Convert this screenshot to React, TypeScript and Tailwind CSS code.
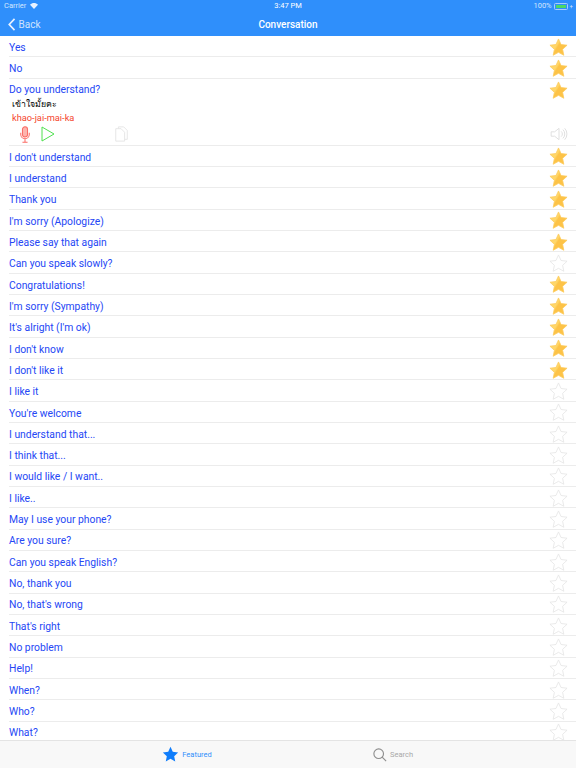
const before = ["Yes", "No"];
const after: [string, boolean][] = [
  ["I don't understand", true],
  ["I understand", true],
  ["Thank you", true],
  ["I'm sorry (Apologize)", true],
  ["Please say that again", true],
  ["Can you speak slowly?", false],
  ["Congratulations!", true],
  ["I'm sorry (Sympathy)", true],
  ["It's alright (I'm ok)", true],
  ["I don't know", true],
  ["I don't like it", true],
  ["I like it", false],
  ["You're welcome", false],
  ["I understand that...", false],
  ["I think that...", false],
  ["I would like / I want..", false],
  ["I like..", false],
  ["May I use your phone?", false],
  ["Are you sure?", false],
  ["Can you speak English?", false],
  ["No, thank you", false],
  ["No, that's wrong", false],
  ["That's right", false],
  ["No problem", false],
  ["Help!", false],
  ["When?", false],
  ["Who?", false],
  ["What?", false],
];

const STAR = "M12 1.2l3.2 7 7.6.9-5.6 5.2 1.5 7.5L12 18.1l-6.7 3.7 1.5-7.5L1.2 9.1l7.6-.9z";

function Star({ on }: { on: boolean }) {
  return (
    <svg viewBox="0 0 24 24" className="w-[19px] h-[19px] shrink-0 mt-[2px]">
      <defs>
        <linearGradient id="gold" x1="0" y1="0" x2="1" y2="0.6">
          <stop offset="0.45" stopColor="#ffd769" />
          <stop offset="0.55" stopColor="#fdc347" />
        </linearGradient>
      </defs>
      <path
        d={STAR}
        fill={on ? "url(#gold)" : "#ffffff"}
        stroke={on ? "#fccb5c" : "#e4e4e4"}
        strokeWidth="1"
        strokeLinejoin="round"
      />
    </svg>
  );
}

function Row({ label, on }: { label: string; on: boolean }) {
  return (
    <div className="h-[21.33px] pl-[9px] overflow-hidden">
      <div className="h-full flex items-center justify-between pr-[8px] border-b border-[#ececec]">
        <span className="text-[#2547f5] pt-[3px]">{label}</span>
        <Star on={on} />
      </div>
    </div>
  );
}

export default function App() {
  return (
    <div className="w-[576px] h-[768px] flex flex-col bg-white overflow-hidden font-['Roboto',sans-serif] text-[10.35px]">
      {/* Nav */}
      <div className="h-[36px] shrink-0 bg-[#2f8ffb] text-white flex flex-col">
        <div className="h-[12px] flex items-center justify-between pl-[4px] pr-[3px] text-[7.5px] text-[#d5e7fe] relative">
          <div className="flex items-center gap-[4px]">
            <span>Carrier</span>
            <svg viewBox="0 0 16 12" className="w-[8px] h-[6px]" fill="#e8f2ff">
              <path d="M8 12L0 3.500C4.500-1 11.500-1 16 3.500z" />
            </svg>
          </div>
          <span className="absolute left-0 right-0 text-center text-white">3:47 PM</span>
          <div className="flex items-center gap-[2px]">
            <span>100%</span>
            <div className="w-[14px] h-[7px] border border-[#a9cdfb] rounded-[1.5px] p-[1px]">
              <div className="w-full h-full bg-[#4cd964]" />
            </div>
            <span className="text-[6px] leading-none">+</span>
          </div>
        </div>
        <div className="flex-1 flex items-center justify-between relative pl-[8px]">
          <div className="flex items-center gap-[3px] text-[#cfe3fe] text-[10px]">
            <svg viewBox="0 0 8 14" className="w-[7.5px] h-[13px]" fill="none" stroke="#e8f2ff" strokeWidth="1.800">
              <path d="M7 1L1.300 7 7 13" />
            </svg>
            <span>Back</span>
          </div>
          <span className="absolute left-0 right-0 text-center text-[10px] font-medium">Conversation</span>
        </div>
      </div>

      {/* List */}
      <div className="flex-1 min-h-0 overflow-hidden">
        {before.map((label) => (
          <Row key={label} label={label} on />
        ))}

        {/* Expanded row */}
        <div className="pl-[9px]">
          <div className="h-[67px] border-b border-[#ececec] pr-[8px] flex flex-col">
            <div className="h-[21px] shrink-0 flex items-center justify-between">
              <span className="text-[#2547f5] pt-[2px]">Do you understand?</span>
              <Star on />
            </div>
            <span className="pl-[3px] -mt-[3px] text-[8.75px] leading-[14px] text-black font-['Noto_Sans',sans-serif]">เข้าใจมั้ยคะ</span>
            <span className="pl-[3px] text-[9.25px] leading-[14px] text-[#f5452d]">khao-jai-mai-ka</span>
            <div className="flex items-center justify-between h-[17px] mt-[1px]">
              <div className="flex items-center">
                <svg viewBox="0 0 14 20" className="w-[12px] h-[17px] ml-[10px]" fill="none" stroke="#fb6a63" strokeWidth="1.200">
                  <rect x="4" y="1" width="6" height="12" rx="3" fill="#fdb4ae" />
                  <path d="M2 8v2a5 5 0 0 0 10 0V8M7 15v4M4 19h6" />
                </svg>
                <svg viewBox="0 0 14 16" className="w-[14px] h-[16px] ml-[10px]" fill="none" stroke="#4fe04f" strokeWidth="1">
                  <path d="M1 1l12 7-12 7z" />
                </svg>
                <svg viewBox="0 0 15 18" className="w-[15px] h-[16px] ml-[59px]" fill="none" stroke="#e4e4e4" strokeWidth="1">
                  <path d="M4 3V1h6l4 4v10h-3" />
                  <path d="M1 3h6l4 4v10H1z" />
                </svg>
              </div>
              <svg viewBox="0 0 20 16" className="w-[18px] h-[14px]" fill="none" stroke="#dcdcdc" strokeWidth="1">
                <path d="M1 5.500h4L10 1.500v13L5 10.500H1z" />
                <path d="M12.500 5a4 4 0 0 1 0 6M14.500 3a7 7 0 0 1 0 10M16.500 1.500a9.500 9.500 0 0 1 0 13" />
              </svg>
            </div>
          </div>
        </div>

        {after.map(([label, on]) => (
          <Row key={label} label={label} on={on} />
        ))}
      </div>

      {/* Tab bar */}
      <div className="h-[28px] shrink-0 bg-[#f8f8f8] border-t border-[#e4e4e4] flex items-center text-[7.5px]">
        <div className="w-[288px] pl-[86px] flex items-center justify-center gap-[3px] text-[#2f8ffb]">
          <svg viewBox="0 0 24 24" className="w-[17px] h-[17px]" fill="#0f7dfb">
            <path d={STAR} />
          </svg>
          <span>Featured</span>
        </div>
        <div className="w-[288px] pr-[78px] flex items-center justify-center gap-[3px] text-[#a8a8a8]">
          <svg viewBox="0 0 16 16" className="w-[14px] h-[14px]" fill="none" stroke="#8e8e8e" strokeWidth="1.300">
            <circle cx="6.500" cy="6.500" r="5.500" />
            <path d="M10.500 10.500L15 15" />
          </svg>
          <span>Search</span>
        </div>
      </div>
    </div>
  );
}
